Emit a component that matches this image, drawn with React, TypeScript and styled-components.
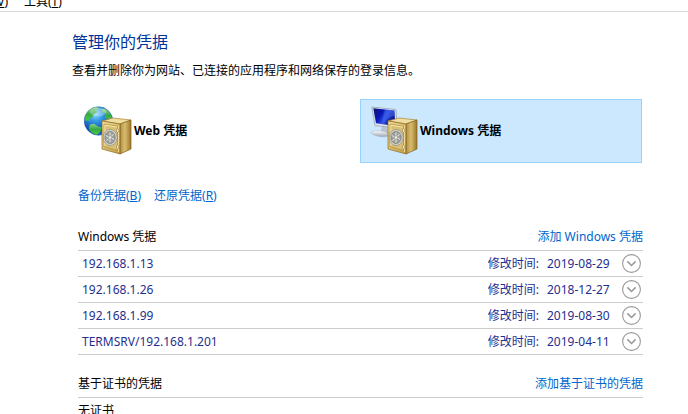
import React, { useId } from 'react';
import styled, { createGlobalStyle } from 'styled-components';

const GlobalStyle = createGlobalStyle`
  *, *::before, *::after { box-sizing: border-box; }
  body {
    margin: 0;
    background: #fff;
    color: #000;
    font-family: "Noto Sans", "Noto Sans CJK SC", sans-serif;
    font-size: 12px;
    line-height: 18px;
    overflow: hidden;
  }
  button { font: inherit; color: inherit; }
`;

const MenuBar = styled.nav`
  display: flex;
  align-items: flex-end;
  gap: 16px;
  height: 12px;
  overflow: hidden;
  border-bottom: 1px solid #d9d9d9;
`;

const MenuItem = styled.button<{ $clipped?: boolean }>`
  display: flex;
  justify-content: flex-end;
  width: ${(p) => (p.$clipped ? '8px' : 'auto')};
  flex: none;
  padding: 0;
  border: 0;
  background: none;
`;

const Content = styled.main`
  padding: 19px 45px 0 72px;
`;

const Title = styled.h1`
  margin: 0;
  color: #003399;
  font-size: 16px;
  font-weight: 400;
  line-height: 22px;
`;

const Description = styled.p`
  margin: 9px 0 19px;
`;

const Vaults = styled.div`
  display: grid;
  grid-template-columns: 1fr 1fr;
  gap: 4px;
  margin: 0 1px 0 2px;
`;

const VaultButton = styled.button<{ $selected?: boolean }>`
  display: flex;
  align-items: center;
  gap: 2px;
  height: 64px;
  padding: 0 9px;
  border: 1px solid ${(p) => (p.$selected ? '#99d1ff' : 'transparent')};
  background: ${(p) => (p.$selected ? '#cce8ff' : 'transparent')};
  font-weight: 700;
  text-align: left;
`;

const Details = styled.div`
  padding-left: 6px;
`;

const Actions = styled.div`
  display: flex;
  gap: 13px;
  margin: 24px 0 23px;
`;

const Link = styled.a`
  color: #0066cc;
  text-decoration: none;
`;

const Section = styled.section`
  margin-bottom: 20px;
`;

const SectionHeader = styled.header`
  display: flex;
  justify-content: space-between;
  height: 23px;
  border-bottom: 1px solid #cccccc;
`;

const SectionTitle = styled.h2`
  margin: 0;
  font-size: 12px;
  font-weight: 400;
`;

const CredentialTable = styled.table`
  width: 100%;
  border-spacing: 0;
  color: #1f2f8f;
`;

const Cell = styled.td<{ $fit?: boolean }>`
  height: 26px;
  width: ${(p) => (p.$fit ? '1px' : 'auto')};
  padding: 0 0 0 4px;
  border-bottom: 1px solid #cccccc;
  white-space: nowrap;
`;

const Modified = styled.div`
  display: flex;
  gap: 8px;
`;

const ModifiedDate = styled.time`
  width: 67px;
`;

const ExpandButton = styled.button`
  display: block;
  width: 19px;
  height: 19px;
  margin: 0 2px 0 4px;
  padding: 0;
  border: 0;
  background: none;
`;

const EmptyNote = styled.p`
  margin: 4px 0 0;
`;

const Safe = ({ id }: { id: string }) => (
  <g>
    <defs>
      <linearGradient id={`${id}front`} x1="0" y1="0" x2="1" y2="1">
        <stop offset="0" stopColor="#f1dfa0" />
        <stop offset="0.5" stopColor="#d9bd69" />
        <stop offset="1" stopColor="#c29c43" />
      </linearGradient>
      <linearGradient id={`${id}side`} x1="0" y1="0" x2="1" y2="0">
        <stop offset="0" stopColor="#b58f3d" />
        <stop offset="0.45" stopColor="#d8bd70" />
        <stop offset="1" stopColor="#9c7626" />
      </linearGradient>
      <radialGradient id={`${id}dial`}>
        <stop offset="0" stopColor="#f5f5f1" />
        <stop offset="0.6" stopColor="#a5a69f" />
        <stop offset="1" stopColor="#e7e5dc" />
      </radialGradient>
    </defs>
    <path d="M18 15 29 12 47 14 36 18Z" fill="#f0dda0" stroke="#a98233" strokeWidth="0.7" strokeLinejoin="round" />
    <path d="M36 18 47 14V43L36 48Z" fill={`url(#${id}side)`} stroke="#80611f" strokeWidth="0.7" strokeLinejoin="round" />
    <path d="M18 15 36 18V48L18 43Z" fill={`url(#${id}front)`} stroke="#8c6b28" strokeWidth="0.7" strokeLinejoin="round" />
    <path d="M20 18 33.5 20.3V44.5L20 40.8Z" fill="#d9bf73" stroke="#a5843b" strokeWidth="0.6" />
    <path d="M20.8 40V19.1L32.8 21.1" fill="none" stroke="#fff0b7" strokeWidth="0.8" />
    <path d="M34.5 20V46" stroke="#f4df9e" strokeWidth="0.9" />
    <ellipse cx="33.6" cy="24.5" rx="1.2" ry="2" fill="#eee4bd" stroke="#8a7038" strokeWidth="0.5" />
    <ellipse cx="33.6" cy="41" rx="1.2" ry="2" fill="#eee4bd" stroke="#8a7038" strokeWidth="0.5" />
    <ellipse cx="26.2" cy="31.5" rx="7" ry="8" fill={`url(#${id}dial)`} stroke="#8a887a" strokeWidth="0.7" />
    <ellipse cx="26" cy="31.5" rx="5" ry="5.9" fill="#9fa19c" stroke="#7f817d" strokeWidth="0.8" />
    <path d="M26 26.4V36.6M21.8 29.6 30.2 33.4M29.6 28.4 22.4 34.6" stroke="#eeeeea" strokeWidth="0.9" />
    <circle cx="26" cy="31.5" r="1.7" fill="#f1f1ed" stroke="#6f726c" strokeWidth="0.5" />
  </g>
);

const WebVaultIcon = () => {
  const id = useId();
  return (
    <svg width="48" height="50" viewBox="0 0 48 50" aria-hidden="true">
      <defs>
        <radialGradient id={`${id}sea`} cx="0.4" cy="0.25" r="0.8">
          <stop offset="0" stopColor="#8edbff" />
          <stop offset="0.35" stopColor="#2f93e2" />
          <stop offset="0.75" stopColor="#114aae" />
          <stop offset="1" stopColor="#2a75c9" />
        </radialGradient>
        <linearGradient id={`${id}land`} x1="0" y1="0" x2="0" y2="1">
          <stop offset="0" stopColor="#8fd08a" />
          <stop offset="0.5" stopColor="#35a845" />
          <stop offset="1" stopColor="#4fcf3a" />
        </linearGradient>
      </defs>
      <circle cx="14.5" cy="15" r="14.3" fill={`url(#${id}sea)`} stroke="#2465ac" strokeWidth="0.5" />
      <path d="M1.2 10C3 4.8 7.5 1.5 12 1L15 2.2 12.2 4.4 13 6.5 9.6 8.2 8.3 11.4 5.1 12.8 6.1 15.2 3.5 14.2 1.5 15.2Z" fill={`url(#${id}land)`} />
      <path d="M6 18.5 10 17.8 14.2 20.6 18 21.5 16.5 25.8 12.8 28.8C8.8 27.8 6 25.6 4.8 22.5Z" fill={`url(#${id}land)`} />
      <path d="M17.5 3.2 21 2.8C25.3 5.2 28 9.2 28.5 14L26.2 15.7 24.3 12.2 21.7 12.7 20.5 9.5 22 7 18.4 6.5Z" fill={`url(#${id}land)`} />
      <ellipse cx="14" cy="6" rx="8.5" ry="4.2" fill="#fff" opacity="0.28" />
      <Safe id={id} />
    </svg>
  );
};

const WindowsVaultIcon = () => {
  const id = useId();
  return (
    <svg width="48" height="50" viewBox="0 0 48 50" aria-hidden="true">
      <defs>
        <linearGradient id={`${id}screen`} x1="0" y1="0" x2="1" y2="0.5">
          <stop offset="0" stopColor="#11166e" />
          <stop offset="0.4" stopColor="#0914b9" />
          <stop offset="0.62" stopColor="#2848df" />
          <stop offset="1" stopColor="#071293" />
        </linearGradient>
        <linearGradient id={`${id}base`} x1="0" y1="0" x2="0" y2="1">
          <stop offset="0" stopColor="#ffffff" />
          <stop offset="1" stopColor="#9aa4b2" />
        </linearGradient>
      </defs>
      <path d="M12 20 17 21 19 28H10Z" fill="#b9c2ce" />
      <path d="M1 26.5C3 24 12 24 18 27L19 30C13 32 3 30 1 26.5Z" fill={`url(#${id}base)`} stroke="#a6afbb" strokeWidth="0.5" />
      <path d="M1.8 1 26 3.5 27 22 5 19.5Z" fill="#e1e6ef" stroke="#8c97aa" strokeWidth="0.7" strokeLinejoin="round" />
      <path d="M3.3 2.3 24.5 4.6 25.3 20 6 17.2Z" fill={`url(#${id}screen)`} />
      <path d="M15 3.6 24.5 4.6 24.8 10C20 10 17 13 14.3 18.4L11.5 18C13 13 13.5 8 15 3.6Z" fill="#567cf0" opacity="0.4" />
      <Safe id={id} />
    </svg>
  );
};

const Chevron = () => (
  <svg width="19" height="19" viewBox="0 0 19 19" fill="none" display="block" aria-hidden="true">
    <circle cx="9.5" cy="9.5" r="8.9" stroke="#999" strokeWidth="1.1" />
    <path d="M5.4 7.4 9.5 11.5 13.6 7.4" stroke="#999" strokeWidth="1.5" />
  </svg>
);

const credentials = [
  { name: '192.168.1.13', date: '2019-08-29' },
  { name: '192.168.1.26', date: '2018-12-27' },
  { name: '192.168.1.99', date: '2019-08-30' },
  { name: 'TERMSRV/192.168.1.201', date: '2019-04-11' },
];

export default function App() {
  return (
    <>
      <GlobalStyle />
      <MenuBar>
        <MenuItem $clipped><span>(<u>V</u>)</span></MenuItem>
        <MenuItem><span>工具(<u>T</u>)</span></MenuItem>
      </MenuBar>
      <Content>
        <Title>管理你的凭据</Title>
        <Description>查看并删除你为网站、已连接的应用程序和网络保存的登录信息。</Description>
        <Vaults>
          <VaultButton><WebVaultIcon />Web 凭据</VaultButton>
          <VaultButton $selected><WindowsVaultIcon />Windows 凭据</VaultButton>
        </Vaults>
        <Details>
          <Actions>
            <Link href="#backup">备份凭据(<u>B</u>)</Link>
            <Link href="#restore">还原凭据(<u>R</u>)</Link>
          </Actions>
          <Section>
            <SectionHeader>
              <SectionTitle>Windows 凭据</SectionTitle>
              <Link href="#add-windows">添加 Windows 凭据</Link>
            </SectionHeader>
            <CredentialTable>
              <tbody>
                {credentials.map((c) => (
                  <tr key={c.name}>
                    <Cell>{c.name}</Cell>
                    <Cell $fit>
                      <Modified>
                        <span>修改时间:</span>
                        <ModifiedDate dateTime={c.date}>{c.date}</ModifiedDate>
                      </Modified>
                    </Cell>
                    <Cell $fit>
                      <ExpandButton aria-label={`展开 ${c.name}`}><Chevron /></ExpandButton>
                    </Cell>
                  </tr>
                ))}
              </tbody>
            </CredentialTable>
          </Section>
          <Section>
            <SectionHeader>
              <SectionTitle>基于证书的凭据</SectionTitle>
              <Link href="#add-certificate">添加基于证书的凭据</Link>
            </SectionHeader>
            <EmptyNote>无证书</EmptyNote>
          </Section>
        </Details>
      </Content>
    </>
  );
}
